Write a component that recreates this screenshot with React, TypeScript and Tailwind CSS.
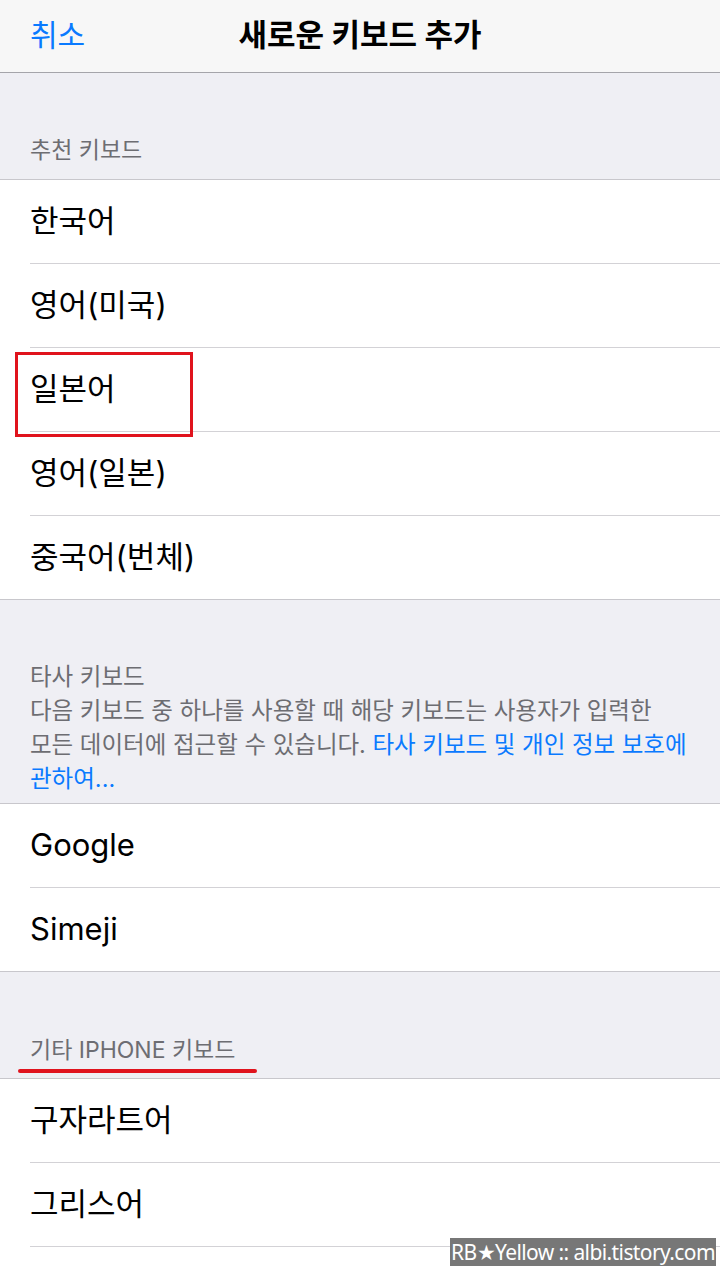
import React from "react";

const FONT = { fontFamily: 'Inter, "Noto Sans CJK KR", "Noto Sans", sans-serif' };

function Row({ label, last, children }: { label: string; last?: boolean; children?: React.ReactNode }) {
  return (
    <div className="relative bg-white">
      <div className="flex h-[83px] items-center pl-[30px] text-[31px] text-black">{label}</div>
      {last ? <div className="h-px bg-[#c8c7cc]" /> : <div className="ml-[30px] h-px bg-[#d3d2d6]" />}
      {children}
    </div>
  );
}

function SectionHead({ h, children }: { h: string; children: React.ReactNode }) {
  return (
    <div className={`relative flex flex-col justify-end border-b border-[#c8c7cc] bg-[#efeff4] px-[30px] ${h}`}>
      {children}
    </div>
  );
}

export default function App() {
  return (
    <div className="relative h-[1280px] w-[720px] overflow-hidden bg-white" style={FONT}>
      {/* Nav bar */}
      <header className="grid h-[73px] grid-cols-[1fr_auto_1fr] items-center border-b border-[#a5a5aa] bg-[#f7f7f7] px-[30px] pb-[2px]">
        <span className="text-[30px] text-[#0a7aff]">취소</span>
        <span className="text-[31px] font-bold text-black">새로운 키보드 추가</span>
        <span />
      </header>

      <SectionHead h="h-[107px]">
        <div className="pb-[12px] text-[23px] leading-[34px] text-[#6d6d72]">추천 키보드</div>
      </SectionHead>
      <Row label="한국어" />
      <Row label="영어(미국)" />
      <Row label="일본어">
        <div className="absolute left-[15px] top-[4px] z-10 h-[85px] w-[178px] border-[3px] border-[#e0131d]" />
      </Row>
      <Row label="영어(일본)" />
      <Row label="중국어(번체)" last />

      <SectionHead h="h-[204px]">
        <div className="whitespace-nowrap pb-[7px] text-[23.5px] leading-[34px] text-[#6d6d72]">
          <div>타사 키보드</div>
          <div>다음 키보드 중 하나를 사용할 때 해당 키보드는 사용자가 입력한</div>
          <div>
            모든 데이터에 접근할 수 있습니다.{" "}
            <span className="text-[#0a7aff]">타사 키보드 및 개인 정보 보호에</span>
          </div>
          <div className="text-[#0a7aff]">관하여...</div>
        </div>
      </SectionHead>
      <Row label="Google" />
      <Row label="Simeji" last />

      <SectionHead h="h-[107px]">
        <div className="pb-[11px] text-[23px] leading-[34px] text-[#6d6d72]">기타 IPHONE 키보드</div>
        <div className="absolute left-[18px] top-[97px] h-[4px] w-[239px] rounded-full bg-[#e0131d]" />
      </SectionHead>
      <Row label="구자라트어" />
      <Row label="그리스어" />

      {/* Watermark */}
      <div
        className="absolute left-[450px] top-[1238px] flex h-[28px] w-[266px] items-center justify-center whitespace-nowrap bg-[#777777] text-[21px] leading-none tracking-[-0.6px] text-white"
        style={{ fontFamily: '"Noto Sans", sans-serif' }}
      >
        RB★Yellow :: albi.tistory.com
      </div>
    </div>
  );
}
